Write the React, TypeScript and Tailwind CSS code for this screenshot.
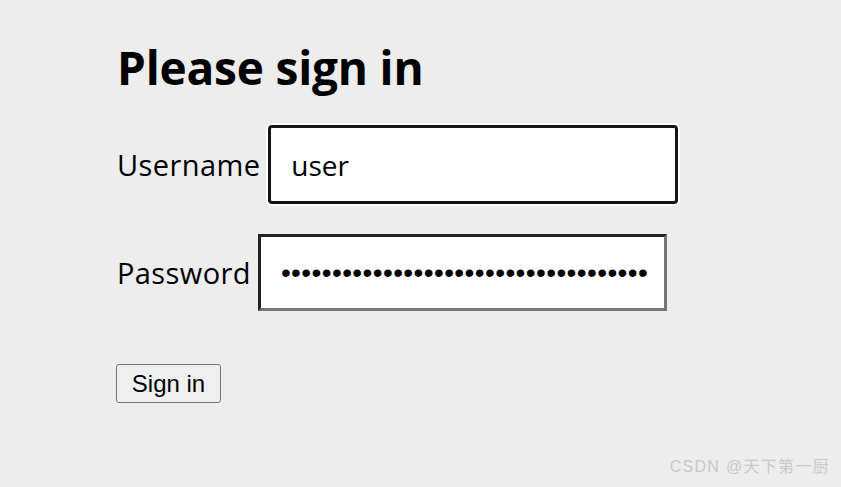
import React from "react";

const App = () => {
  return (
    <div className="relative min-h-[487px] w-full bg-[#ededed] pl-[117px] pt-[38px] font-['Open_Sans',sans-serif] text-black">
      {/* Heading */}
      <h1 className="text-[46px] font-bold leading-[58px] tracking-[-0.2px]">Please sign in</h1>

      <form className="mt-[29px] flex flex-col" onSubmit={(e) => e.preventDefault()}>
        {/* Username */}
        <div className="flex items-center gap-[8px]">
          <label className="text-[29px] tracking-[0.4px]">Username</label>
          <input
            type="text"
            readOnly
            value="user"
            className="h-[79px] w-[410px] rounded-[4px] border-[3px] border-[#161616] bg-white pl-[20px] font-['Open_Sans',sans-serif] text-[28px] text-black outline-none ring-2 ring-white"
          />
        </div>

        {/* Password */}
        <div className="mt-[30px] flex items-center gap-[7px]">
          <label className="text-[29px] tracking-[0.4px]">Password</label>
          <input
            type="password"
            readOnly
            value="123456789012345678901234567890123456"
            className="h-[77px] w-[409px] border-[3px] border-t-[#222] border-l-[#222] border-b-[#767676] border-r-[#767676] bg-white pl-[20px] font-['Liberation_Sans',sans-serif] text-[28px] tracking-[0.4px] text-black outline-none"
          />
        </div>

        {/* Submit */}
        <div className="mt-[53px] -ml-px">
          <button
            type="submit"
            className="h-[39px] w-[105px] rounded-[3px] border border-[#767676] bg-[#efefef] font-['Liberation_Sans',sans-serif] text-[24px] leading-none text-black"
          >
            Sign in
          </button>
        </div>
      </form>

      {/* Watermark */}
      <div className="absolute bottom-[8px] right-[11px] font-['Liberation_Sans','Noto_Sans_CJK_SC',sans-serif] text-[16px] tracking-[1.3px] text-[#c9c9c9]">
        CSDN @天下第一厨
      </div>
    </div>
  );
};

export default App;
